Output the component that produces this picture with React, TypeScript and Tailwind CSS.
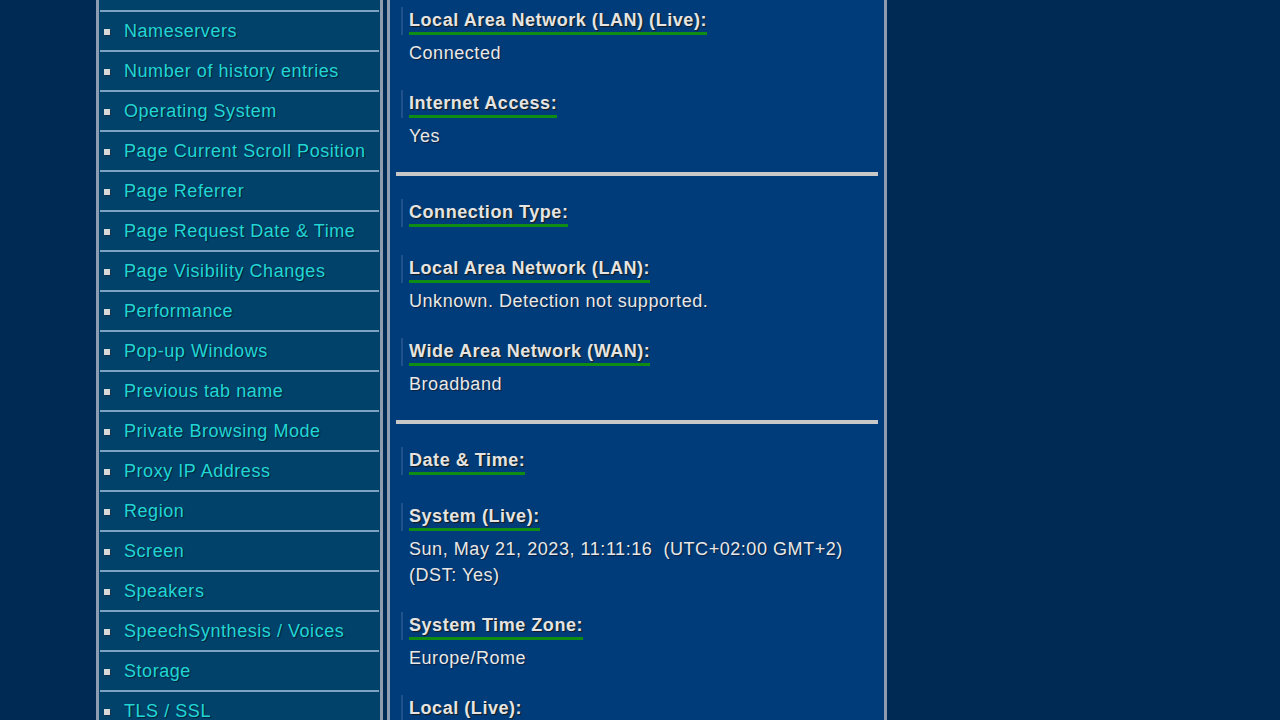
const menu = [
  "Nameservers",
  "Number of history entries",
  "Operating System",
  "Page Current Scroll Position",
  "Page Referrer",
  "Page Request Date & Time",
  "Page Visibility Changes",
  "Performance",
  "Pop-up Windows",
  "Previous tab name",
  "Private Browsing Mode",
  "Proxy IP Address",
  "Region",
  "Screen",
  "Speakers",
  "SpeechSynthesis / Voices",
  "Storage",
  "TLS / SSL",
];

type Item = { label: string; value?: string[] };

const sections: Item[][] = [
  [
    { label: "Local Area Network (LAN) (Live):", value: ["Connected"] },
    { label: "Internet Access:", value: ["Yes"] },
  ],
  [
    { label: "Connection Type:" },
    { label: "Local Area Network (LAN):", value: ["Unknown. Detection not supported."] },
    { label: "Wide Area Network (WAN):", value: ["Broadband"] },
  ],
  [
    { label: "Date & Time:" },
    {
      label: "System (Live):",
      value: ["Sun, May 21, 2023, 11:11:16\u00a0 (UTC+02:00 GMT+2)", "(DST: Yes)"],
    },
    { label: "System Time Zone:", value: ["Europe/Rome"] },
    { label: "Local (Live):", value: ["Sun, May 21, 2023, 11:11:16"] },
  ],
];

function InfoItem({ item }: { item: Item }) {
  return (
    <div className="ml-[5px] pb-[24px]">
      <div className="mb-[4px] flex border-l-2 border-[#21528c] pl-[6px] pt-[2px]">
        <span className="border-b-[3px] border-[#0f8c14] font-bold leading-[23px] text-[#e4e4e4] [text-shadow:1px_1px_1px_#1a1a1a]">
          {item.label}
        </span>
      </div>
      {item.value && (
        <div className="pl-[8px] pt-[1px] leading-[26px] text-[#e8e8e8] [text-shadow:1px_1px_1px_#0a2040]">
          {item.value.map((line) => (
            <div key={line}>{line}</div>
          ))}
        </div>
      )}
    </div>
  );
}

export default function App() {
  return (
    <div className="flex h-screen overflow-hidden bg-[#002a54] font-['Liberation_Sans',Arial,sans-serif] text-[18px] tracking-[0.55px]">
      <div className="w-[96px] shrink-0" />

      <aside className="w-[287px] shrink-0 border-x-[3px] border-[#8e9cb1] bg-[#00426a] pt-[10px]">
        <ul>
          {menu.map((name) => (
            <li
              key={name}
              className="mx-[1px] flex h-[40px] items-center border-t-2 border-[#7fa2c2]"
            >
              <span className="ml-[4px] mt-[1px] h-[6px] w-[6px] bg-[#d8d8d8] shadow-[1px_1px_0_#12314a]" />
              <span className="ml-[14px] mt-[1px] text-[#22d6d6] [text-shadow:1px_1px_1px_#062238]">
                {name}
              </span>
            </li>
          ))}
        </ul>
      </aside>

      <div className="w-[4px] shrink-0" />

      <main className="w-[500px] shrink-0 border-x-[3px] border-[#8e9cb1] bg-[#003c7a] px-[6px] pt-[7px]">
        {sections.map((section, i) => (
          <div key={i}>
            {i > 0 && <div className="-mt-[1px] mb-[23px] h-[4px] bg-[#c8c8c8]" />}
            {section.map((item) => (
              <InfoItem key={item.label} item={item} />
            ))}
          </div>
        ))}
      </main>

      <div className="flex-1" />
    </div>
  );
}
